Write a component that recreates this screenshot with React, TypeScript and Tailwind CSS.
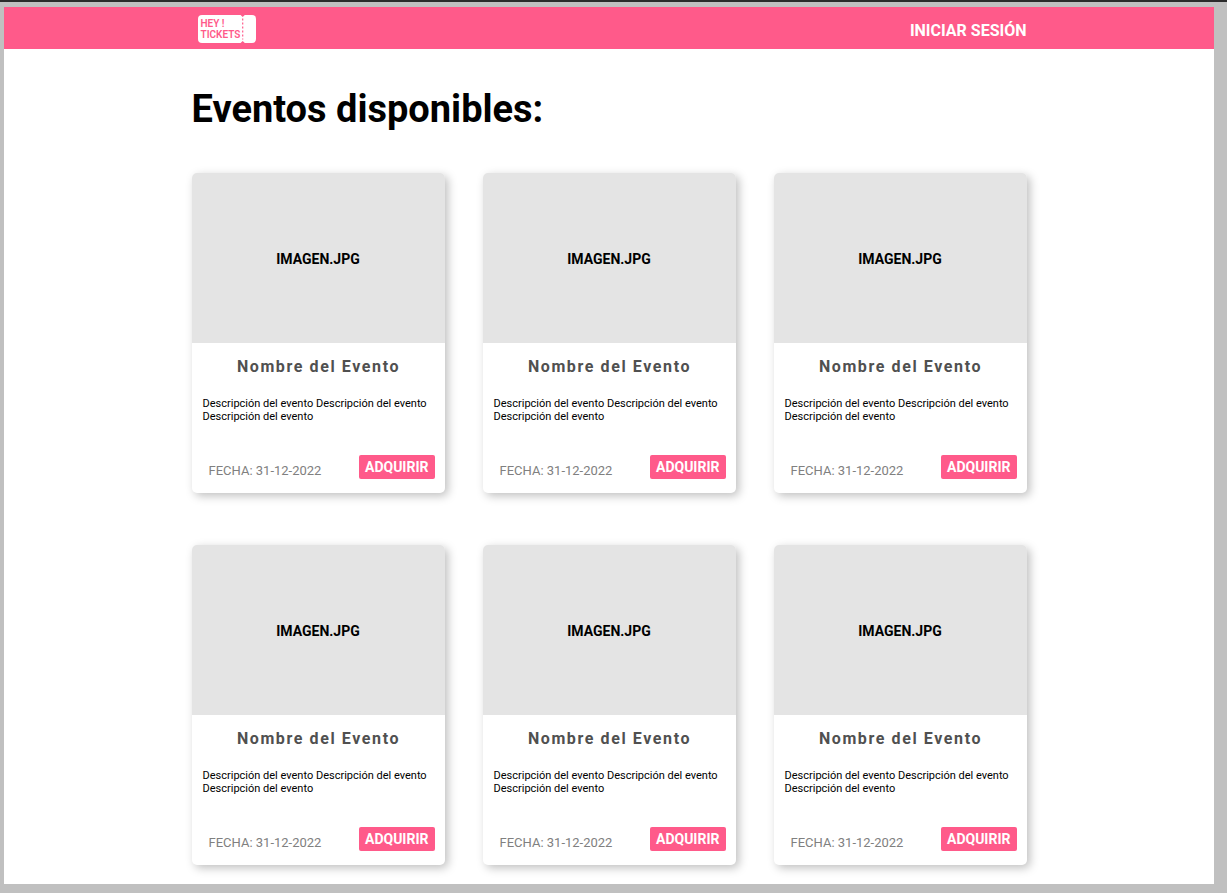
const events = [1, 2, 3, 4, 5, 6].map((id) => ({
  id,
  name: 'Nombre del Evento',
  description: 'Descripción del evento Descripción del evento Descripción del evento',
  date: '31-12-2022',
}));

type Event = (typeof events)[number];

function Logo() {
  return (
    <a
      href="#"
      className="relative ml-1.5 flex h-7 w-[58px] flex-col justify-center rounded-sm bg-white pl-[3px] text-[10px] leading-[11px] font-semibold text-[#ff5a8a]"
    >
      <span>HEY !</span>
      <span>TICKETS</span>
      <svg className="absolute inset-0" width="58" height="28" viewBox="0 0 58 28" aria-hidden="true">
        <path d="M42.6 0l2.1 2L46.8 0zM42.6 28l2.1-2L46.8 28z" fill="#ff5a8a" />
        <path d="M44.7 3.5v21" stroke="#ff5a8a" strokeWidth="1.2" strokeDasharray="2 2" />
      </svg>
    </a>
  );
}

function EventCard({ event }: { event: Event }) {
  return (
    <article className="overflow-hidden rounded-[5px] bg-white shadow-[3px_3px_10px_rgba(0,0,0,0.25)]">
      <div className="flex h-[170px] items-center justify-center bg-[#e4e4e4] pt-px text-sm font-bold">
        IMAGEN.JPG
      </div>
      <div className="flex h-[150px] flex-col pt-3 pr-2.5 pb-[14px] pl-[11px]">
        <h2 className="text-center text-base leading-6 font-bold tracking-widest text-[#505050]">
          {event.name}
        </h2>
        <p className="mt-[18px] text-[11px] leading-[13px]">{event.description}</p>
        <div className="mt-auto flex items-end justify-between pl-1.5">
          <p className="text-[13px] leading-4 text-[#808080]">FECHA: {event.date}</p>
          <button
            type="button"
            className="h-6 rounded-xs bg-[#ff5a8a] px-1.5 text-sm leading-6 font-bold text-white"
          >
            ADQUIRIR
          </button>
        </div>
      </div>
    </article>
  );
}

export default function App() {
  return (
    <div className="min-h-screen border-t-2 border-[#2b2b2b] bg-[#c0c0c0] pt-[5px] pr-[13px] pb-[9px] pl-1 font-['Roboto',sans-serif] text-black">
      <div className="bg-white pb-[19px]">
        <header className="bg-[#ff5a8a]">
          <div className="mx-auto flex h-[42px] max-w-[835px] items-center justify-between pt-0.5">
            <Logo />
            <a href="#" className="pt-1 text-base font-bold text-white">
              INICIAR SESIÓN
            </a>
          </div>
        </header>
        <main className="mx-auto max-w-[835px] pt-9">
          <h1 className="text-[38px] leading-[48px] font-bold">Eventos disponibles:</h1>
          <div className="mt-10 grid grid-cols-3 gap-x-[38px] gap-y-[52px]">
            {events.map((event) => (
              <EventCard key={event.id} event={event} />
            ))}
          </div>
        </main>
      </div>
    </div>
  );
}
